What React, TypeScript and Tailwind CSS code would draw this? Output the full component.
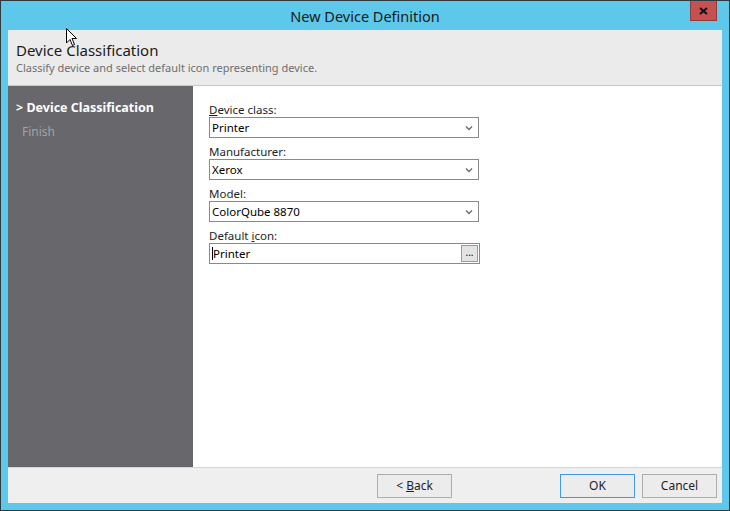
import React from 'react';

const font = { fontFamily: '"Segoe UI", "Noto Sans", "Open Sans", sans-serif' };

const Chevron = () => (
  <svg width="8" height="6" viewBox="0 0 8 6" className="text-[#6d6d6d]">
    <path d="M1 1.5 L4 4.5 L7 1.5" fill="none" stroke="currentColor" strokeWidth="1.4" />
  </svg>
);

const Combo = ({ value }: { value: string }) => (
  <div className="flex items-center justify-between w-[270px] h-[21px] border border-[#8a8a8a] bg-white pl-[2px] pr-[5px]">
    <span className="text-[11.5px] text-black leading-none">{value}</span>
    <Chevron />
  </div>
);

const Label = ({ children }: { children: React.ReactNode }) => (
  <div className="text-[11.5px] text-[#1e1e1e] h-[14px] leading-[14px]">{children}</div>
);

const Btn = ({ children, focus }: { children: React.ReactNode; focus?: boolean }) => (
  <button
    className={`w-[75px] h-[24px] text-[12px] text-[#1e1e1e] bg-[#ececec] border ${
      focus ? 'border-[#3c9be8]' : 'border-[#adadad]'
    }`}
  >
    {children}
  </button>
);

export default function App() {
  return (
    <div style={font} className="w-[730px] h-[511px] bg-[#5ec8ea] border border-[#2e3a40] flex flex-col relative overflow-hidden">
      {/* title bar */}
      <div className="h-[29px] relative flex items-center justify-center">
        <span className="text-[14.5px] text-[#1a1a1a] mt-[2px]">New Device Definition</span>
        <div className="absolute right-[12px] top-0 w-[27px] h-[20px] bg-[#c75050] border border-[#8e3d3d] border-t-0 flex items-center justify-center">
          <svg width="9" height="8" viewBox="0 0 9 8">
            <path d="M1 1 L8 7 M8 1 L1 7" stroke="#111" strokeWidth="2" />
          </svg>
        </div>
      </div>

      <div className="mx-[7px] h-[473px] flex flex-col bg-white">
        {/* header */}
        <div className="h-[56px] bg-[#ebebeb] border-b border-[#c8c8c8] px-[8px] pt-[9px]">
          <div className="text-[15px] text-[#1a1a1a] leading-[22px]">Device Classification</div>
          <div className="text-[11px] text-[#6e6e6e] leading-[14px]">Classify device and select default icon representing device.</div>
        </div>

        {/* body */}
        <div className="flex flex-1">
          <div className="w-[185px] bg-[#67676c] px-[8px] pt-[13px]">
            <div className="text-[12.5px] font-bold text-white leading-[18px]">&gt; Device Classification</div>
            <div className="text-[12px] text-[#a2a2a8] leading-[18px] mt-[6px] pl-[6px]">Finish</div>
          </div>
          <div className="flex-1 pl-[16px] pt-[17px] flex flex-col gap-[7px]">
            <div>
              <Label><u>D</u>evice class:</Label>
              <Combo value="Printer" />
            </div>
            <div>
              <Label>Manufacturer:</Label>
              <Combo value="Xerox" />
            </div>
            <div>
              <Label>Model:</Label>
              <Combo value="ColorQube 8870" />
            </div>
            <div>
              <Label>Default <u>i</u>con:</Label>
              <div className="flex items-center w-[271px] h-[21px] border border-[#8a8a8a] bg-white pl-[2px] pr-[1px]">
                <span className="w-px h-[13px] bg-black" />
                <span className="text-[11.5px] text-black leading-none flex-1">Printer</span>
                <div className="w-[17px] h-[17px] bg-[#e3e3e3] border border-[#9a9a9a] flex items-center justify-center text-[10px] leading-none text-black pb-[3px]">
                  ...
                </div>
              </div>
            </div>
          </div>
        </div>

        {/* footer */}
        <div className="h-[36px] bg-[#efefef] border-t border-[#d4d4d4] flex items-center pl-[369px] pt-[1px]">
          <Btn>&lt; <u>B</u>ack</Btn>
          <div className="w-[108px]" />
          <Btn focus>OK</Btn>
          <div className="w-[7px]" />
          <Btn>Cancel</Btn>
        </div>
      </div>

      {/* mouse pointer */}
      <svg className="absolute left-[65px] top-[27px]" width="12" height="19" viewBox="0 0 12 19">
        <path d="M0.5 0.5 L0.5 15 L4 11.5 L6.5 17.5 L8.5 16.5 L6 10.5 L10.5 10.5 Z" fill="white" stroke="black" strokeWidth="1" />
      </svg>
    </div>
  );
}
